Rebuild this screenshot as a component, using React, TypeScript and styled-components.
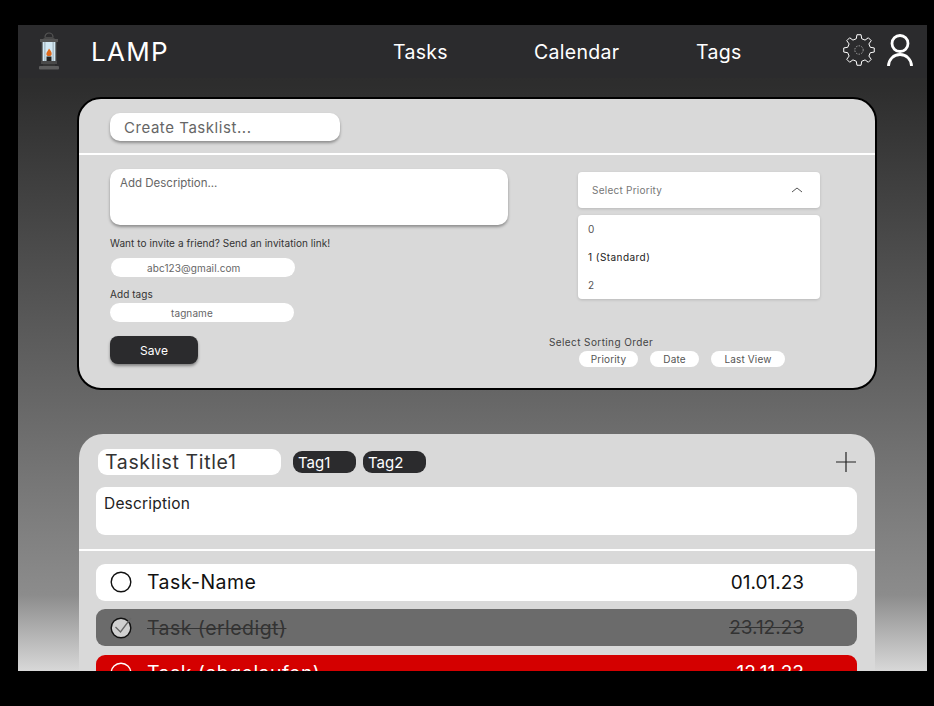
import styled, { createGlobalStyle } from 'styled-components';

const GlobalStyle = createGlobalStyle`
  html, body {
    margin: 0;
    padding: 0;
    background: #000000;
  }
  * {
    box-sizing: border-box;
  }
`;

const FONT = `Inter, "Open Sans", sans-serif`;

const Screen = styled.div`
  width: 909px;
  height: 646px;
  margin: 25px 0 0 18px;
  overflow: hidden;
  font-family: ${FONT};
  background: linear-gradient(
    180deg,
    #2c2c2c 0,
    #2d2d2d 60px,
    #666666 370px,
    #8c8c8c 570px,
    #d8d8d8 646px
  );
`;

const Header = styled.header`
  height: 53px;
  background: #2b2b2d;
  display: flex;
  align-items: center;
  padding-left: 20px;
`;

const LampIcon = styled.svg`
  width: 22px;
  height: 40px;
  margin-top: -2px;
`;

const Logo = styled.div`
  margin-left: 31px;
  width: 302px;
  font-size: 26px;
  font-weight: 400;
  letter-spacing: 1.3px;
  color: #ffffff;
`;

const Nav = styled.nav`
  display: flex;
  align-items: center;
  width: 450px;
`;

const NavLink = styled.a<{ $width: number }>`
  width: ${(p) => p.$width}px;
  font-size: 19.5px;
  letter-spacing: 0.3px;
  color: #ffffff;
`;

const GearIcon = styled.svg`
  width: 32px;
  height: 32px;
  margin-top: -4px;
`;

const UserIcon = styled.svg`
  width: 26px;
  height: 32px;
  margin: -3px 0 0 12px;
`;

const Card = styled.section`
  background: #d9d9d9;
  overflow: hidden;
`;

const CreateCard = styled(Card)`
  width: 800px;
  height: 293px;
  margin: 19px 0 0 59px;
  border: 2px solid #000000;
  border-radius: 24px;
`;

const CreateTop = styled.div`
  height: 56px;
  padding: 14px 0 0 31px;
  border-bottom: 2px solid #ffffff;
`;

const TitleInput = styled.div`
  width: 230px;
  height: 28px;
  padding-left: 14px;
  display: flex;
  align-items: center;
  background: #ffffff;
  border-radius: 10px;
  box-shadow: 0 2px 3px rgba(0, 0, 0, 0.35);
  font-size: 15px;
  letter-spacing: 0.55px;
  color: #666666;
`;

const CreateBody = styled.div`
  display: flex;
`;

const LeftColumn = styled.div`
  width: 470px;
  padding: 14px 0 0 31px;
`;

const RightColumn = styled.div`
  padding-top: 17px;
`;

const DescriptionInput = styled.div`
  width: 398px;
  height: 56px;
  padding: 7px 10px;
  background: #ffffff;
  border-radius: 10px;
  box-shadow: 0 2px 3px rgba(0, 0, 0, 0.35);
  font-size: 11.5px;
  color: #666666;
`;

const SmallLabel = styled.div<{ $top: number }>`
  margin-top: ${(p) => p.$top}px;
  height: 13px;
  line-height: 13px;
  font-size: 10px;
  letter-spacing: 0.06px;
  color: #333333;
`;

const PillInput = styled.div<{ $left?: number; $top: number; $pad: number }>`
  width: 184px;
  height: 19px;
  margin: ${(p) => p.$top}px 0 0 ${(p) => p.$left ?? 0}px;
  padding-left: ${(p) => p.$pad}px;
  display: flex;
  align-items: center;
  background: #ffffff;
  border-radius: 10px;
  font-size: 10px;
  letter-spacing: 0.1px;
  color: #666666;
`;

const SaveButton = styled.button`
  display: block;
  width: 88px;
  height: 28px;
  margin-top: 14px;
  border: none;
  border-radius: 8px;
  background: #2b2b2d;
  box-shadow: 0 2px 3px rgba(0, 0, 0, 0.4);
  font-family: ${FONT};
  font-size: 12px;
  color: #ffffff;
`;

const Select = styled.div`
  width: 242px;
  height: 36px;
  margin-left: 29px;
  padding: 0 17px 0 14px;
  display: flex;
  align-items: center;
  justify-content: space-between;
  background: #ffffff;
  border-radius: 4px;
  box-shadow: 0 1px 3px rgba(0, 0, 0, 0.15);
  font-size: 10px;
  letter-spacing: 0.25px;
  color: #777777;
`;

const Chevron = styled.svg`
  width: 12px;
  height: 8px;
`;

const Options = styled.ul`
  width: 242px;
  height: 84px;
  margin: 7px 0 0 29px;
  padding: 0;
  list-style: none;
  background: #ffffff;
  border-radius: 4px;
  box-shadow: 0 1px 3px rgba(0, 0, 0, 0.15);
`;

const Option = styled.li<{ $active?: boolean }>`
  height: 28px;
  padding-left: 10px;
  display: flex;
  align-items: center;
  font-size: 10px;
  letter-spacing: 0.45px;
  color: ${(p) => (p.$active ? '#222222' : '#555555')};
`;

const SortLabel = styled.div`
  margin-top: 37px;
  height: 13px;
  line-height: 13px;
  font-size: 10px;
  letter-spacing: 0.4px;
  color: #444444;
`;

const Chips = styled.div`
  display: flex;
  gap: 12px;
  margin: 2px 0 0 30px;
`;

const Chip = styled.div<{ $width: number }>`
  width: ${(p) => p.$width}px;
  height: 16px;
  display: flex;
  align-items: center;
  justify-content: center;
  background: #ffffff;
  border-radius: 8px;
  font-size: 10px;
  letter-spacing: 0.15px;
  color: #555555;
`;

const ListCard = styled(Card)`
  width: 796px;
  height: 300px;
  margin: 44px 0 0 61px;
  border-radius: 24px 24px 0 0;
`;

const ListTop = styled.div`
  padding: 15px 18px 0 17px;
  height: 117px;
  border-bottom: 2px solid #ffffff;
`;

const TitleRow = styled.div`
  display: flex;
  align-items: center;
  height: 26px;
`;

const ListTitle = styled.div`
  width: 183px;
  height: 26px;
  margin: 0 12px 0 2px;
  padding-left: 7px;
  display: flex;
  align-items: center;
  background: #ffffff;
  border-radius: 9px;
  font-size: 19.5px;
  letter-spacing: 0.65px;
  color: #333333;
`;

const Tag = styled.div`
  width: 63px;
  height: 22px;
  margin-right: 7px;
  padding-left: 5px;
  display: flex;
  align-items: center;
  background: #2b2b2d;
  border-radius: 9px;
  font-size: 15px;
  color: #ffffff;
`;

const PlusIcon = styled.svg`
  width: 22px;
  height: 22px;
  margin-left: auto;
`;

const Description = styled.div`
  height: 48px;
  margin-top: 12px;
  padding: 7px 8px;
  background: #ffffff;
  border-radius: 9px;
  font-size: 15.5px;
  letter-spacing: 0.2px;
  color: #222222;
`;

const Rows = styled.div`
  display: flex;
  flex-direction: column;
  gap: 8.8px;
  padding: 13px 18px 0 17px;
`;

type RowKind = 'open' | 'done' | 'late';

const rowColors: Record<RowKind, { bg: string; fg: string }> = {
  open: { bg: '#ffffff', fg: '#111111' },
  done: { bg: '#6b6b6b', fg: '#333333' },
  late: { bg: '#d40000', fg: '#ffffff' },
};

const Row = styled.div<{ $kind: RowKind }>`
  flex: none;
  height: 36.5px;
  padding: 0 53px 0 14px;
  display: flex;
  align-items: center;
  border-radius: 9px;
  background: ${(p) => rowColors[p.$kind].bg};
  color: ${(p) => rowColors[p.$kind].fg};
  font-size: 19.5px;
  text-decoration: ${(p) => (p.$kind === 'done' ? 'line-through' : 'none')};
`;

const RowCheck = styled.svg`
  flex: none;
  width: 22px;
  height: 22px;
`;

const RowName = styled.span`
  margin-left: 15px;
  letter-spacing: 0.45px;
`;

const RowDate = styled.span`
  margin-left: auto;
  font-size: 19px;
`;

const gearPath = (() => {
  // 8 Zaehne, abwechselnd aussen und innen
  const pts: string[] = [];
  const teeth = 8;
  for (let i = 0; i < teeth; i++) {
    const a = (i / teeth) * Math.PI * 2 - Math.PI / 2;
    const step = (Math.PI * 2) / teeth;
    const corners: [number, number][] = [
      [11.6, a - step * 0.3],
      [15.4, a - step * 0.17],
      [15.4, a + step * 0.17],
      [11.6, a + step * 0.3],
    ];
    corners.forEach(([r, t]) => {
      pts.push(`${(16 + r * Math.cos(t)).toFixed(2)} ${(16 + r * Math.sin(t)).toFixed(2)}`);
    });
  }
  return `M${pts.join('L')}Z`;
})();

const Check = ({ kind }: { kind: RowKind }) => (
  <RowCheck viewBox="0 0 22 22">
    <circle
      cx="11"
      cy="11"
      r="9.8"
      fill={kind === 'done' ? '#d0d0d0' : 'none'}
      stroke={kind === 'late' ? '#ffffff' : '#111111'}
      strokeWidth="1.4"
    />
    {kind === 'done' && (
      <path d="M5.5 10l5 5L21 1" fill="none" stroke="#666666" strokeWidth="1.3" />
    )}
  </RowCheck>
);

const App = () => {
  return (
    <>
      <GlobalStyle />
      <Screen>
        <Header>
          <LampIcon viewBox="0 0 22 40">
            <path d="M7 6a4 4 0 0 1 8 0" fill="none" stroke="#555555" strokeWidth="1.2" />
            <path d="M4 9l3-3h8l3 3z" fill="#4a4a4a" />
            <rect x="2" y="8" width="18" height="3" fill="#555555" />
            <rect x="3.5" y="11" width="15" height="19" fill="#d3e8f3" />
            <rect x="3" y="11" width="1.6" height="19" fill="#3d3d3d" />
            <rect x="6.5" y="11" width="0.8" height="19" fill="#8a9aa3" />
            <rect x="14.7" y="11" width="0.8" height="19" fill="#8a9aa3" />
            <rect x="17.4" y="11" width="1.6" height="19" fill="#3d3d3d" />
            <path d="M11 17.500c2 2.400 3 4 2.600 6-.2 1-1 1.600-2.600 1.600S8.600 24.500 8.400 23.500c-.4-2 1.600-3.400 2.600-6z" fill="#e06a1c" />
            <rect x="8.500" y="25.500" width="5" height="4.500" fill="#222222" />
            <rect x="3" y="30" width="16" height="3" fill="#4a4a4a" />
            <rect x="5" y="33" width="12" height="2" fill="#333333" />
            <rect x="1" y="35" width="20" height="3.500" rx="1" fill="#5d5d5d" />
          </LampIcon>
          <Logo>LAMP</Logo>
          <Nav>
            <NavLink $width={141}>Tasks</NavLink>
            <NavLink $width={162}>Calendar</NavLink>
            <NavLink $width={147}>Tags</NavLink>
          </Nav>
          <GearIcon viewBox="0 0 32 32">
            <path d={gearPath} fill="none" stroke="#ffffff" strokeWidth="1" />
            <circle cx="16" cy="16" r="4.2" fill="none" stroke="#bbbbbb" strokeWidth="0.8" strokeDasharray="1.500 1.200" />
          </GearIcon>
          <UserIcon viewBox="0 0 26 32">
            <circle cx="13" cy="9.500" r="8" fill="none" stroke="#ffffff" strokeWidth="2.800" />
            <path d="M1.500 32a11.500 11.500 0 0 1 23 0" fill="none" stroke="#ffffff" strokeWidth="2.800" />
          </UserIcon>
        </Header>

        <CreateCard>
          <CreateTop>
            <TitleInput>Create Tasklist...</TitleInput>
          </CreateTop>
          <CreateBody>
            <LeftColumn>
              <DescriptionInput>Add Description...</DescriptionInput>
              <SmallLabel $top={12}>Want to invite a friend? Send an invitation link!</SmallLabel>
              <PillInput $left={1} $top={8} $pad={36}>abc123@gmail.com</PillInput>
              <SmallLabel $top={11}>Add tags</SmallLabel>
              <PillInput $top={2} $pad={61}>tagname</PillInput>
              <SaveButton>Save</SaveButton>
            </LeftColumn>
            <RightColumn>
              <Select>
                Select Priority
                <Chevron viewBox="0 0 12 8">
                  <path d="M1 6l5-4 5 4" fill="none" stroke="#555555" strokeWidth="1" />
                </Chevron>
              </Select>
              <Options>
                <Option>0</Option>
                <Option $active>1 (Standard)</Option>
                <Option>2</Option>
              </Options>
              <SortLabel>Select Sorting Order</SortLabel>
              <Chips>
                <Chip $width={59}>Priority</Chip>
                <Chip $width={49}>Date</Chip>
                <Chip $width={74}>Last View</Chip>
              </Chips>
            </RightColumn>
          </CreateBody>
        </CreateCard>

        <ListCard>
          <ListTop>
            <TitleRow>
              <ListTitle>Tasklist Title1</ListTitle>
              <Tag>Tag1</Tag>
              <Tag>Tag2</Tag>
              <PlusIcon viewBox="0 0 22 22">
                <path d="M11 1v20M1 11h20" fill="none" stroke="#222222" strokeWidth="1.200" />
              </PlusIcon>
            </TitleRow>
            <Description>Description</Description>
          </ListTop>
          <Rows>
            <Row $kind="open">
              <Check kind="open" />
              <RowName>Task-Name</RowName>
              <RowDate>01.01.23</RowDate>
            </Row>
            <Row $kind="done">
              <Check kind="done" />
              <RowName>Task (erledigt)</RowName>
              <RowDate>23.12.23</RowDate>
            </Row>
            <Row $kind="late">
              <Check kind="late" />
              <RowName>Task (abgelaufen)</RowName>
              <RowDate>12.11.23</RowDate>
            </Row>
          </Rows>
        </ListCard>
      </Screen>
    </>
  );
};

export default App;
